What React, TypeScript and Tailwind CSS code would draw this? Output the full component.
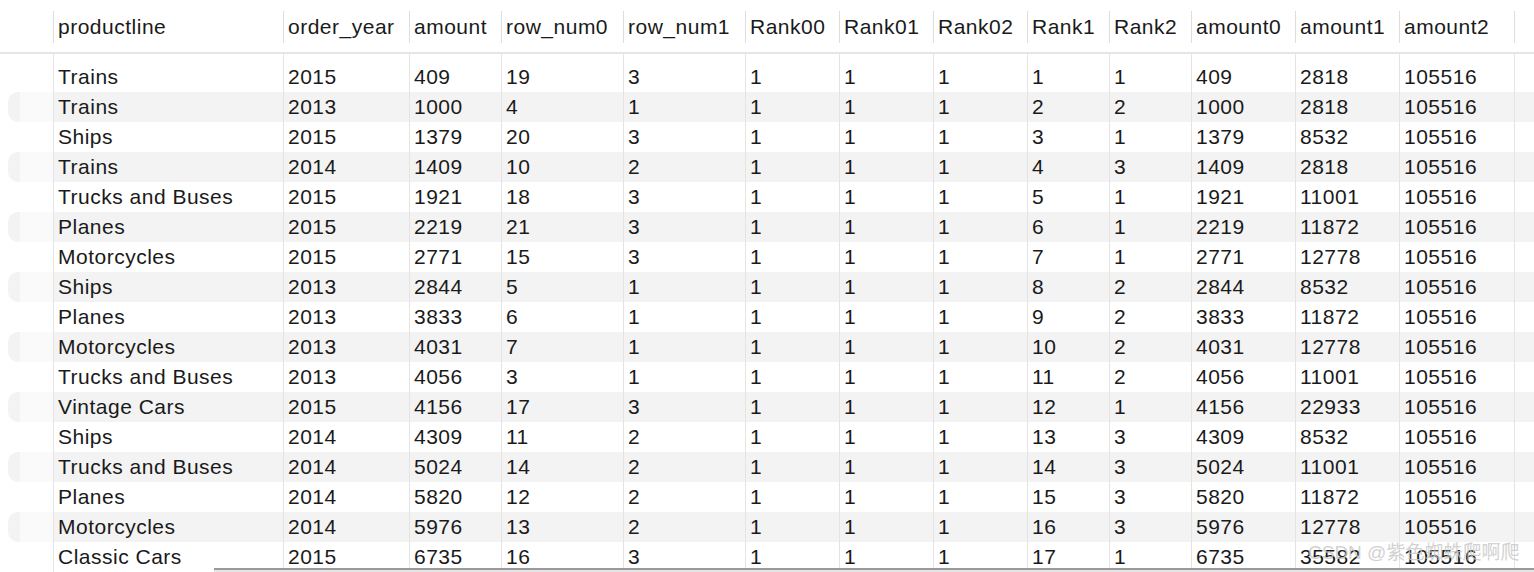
const columns = [
  { name: "productline", w: "w-[230px]" },
  { name: "order_year", w: "w-[126px]" },
  { name: "amount", w: "w-[92px]" },
  { name: "row_num0", w: "w-[122px]" },
  { name: "row_num1", w: "w-[122px]" },
  { name: "Rank00", w: "w-[94px]" },
  { name: "Rank01", w: "w-[94px]" },
  { name: "Rank02", w: "w-[94px]" },
  { name: "Rank1", w: "w-[82px]" },
  { name: "Rank2", w: "w-[82px]" },
  { name: "amount0", w: "w-[104px]" },
  { name: "amount1", w: "w-[104px]" },
  { name: "amount2", w: "w-[115px]" },
];

const rows: (string | number)[][] = [
  ["Trains", 2015, 409, 19, 3, 1, 1, 1, 1, 1, 409, 2818, 105516],
  ["Trains", 2013, 1000, 4, 1, 1, 1, 1, 2, 2, 1000, 2818, 105516],
  ["Ships", 2015, 1379, 20, 3, 1, 1, 1, 3, 1, 1379, 8532, 105516],
  ["Trains", 2014, 1409, 10, 2, 1, 1, 1, 4, 3, 1409, 2818, 105516],
  ["Trucks and Buses", 2015, 1921, 18, 3, 1, 1, 1, 5, 1, 1921, 11001, 105516],
  ["Planes", 2015, 2219, 21, 3, 1, 1, 1, 6, 1, 2219, 11872, 105516],
  ["Motorcycles", 2015, 2771, 15, 3, 1, 1, 1, 7, 1, 2771, 12778, 105516],
  ["Ships", 2013, 2844, 5, 1, 1, 1, 1, 8, 2, 2844, 8532, 105516],
  ["Planes", 2013, 3833, 6, 1, 1, 1, 1, 9, 2, 3833, 11872, 105516],
  ["Motorcycles", 2013, 4031, 7, 1, 1, 1, 1, 10, 2, 4031, 12778, 105516],
  ["Trucks and Buses", 2013, 4056, 3, 1, 1, 1, 1, 11, 2, 4056, 11001, 105516],
  ["Vintage Cars", 2015, 4156, 17, 3, 1, 1, 1, 12, 1, 4156, 22933, 105516],
  ["Ships", 2014, 4309, 11, 2, 1, 1, 1, 13, 3, 4309, 8532, 105516],
  ["Trucks and Buses", 2014, 5024, 14, 2, 1, 1, 1, 14, 3, 5024, 11001, 105516],
  ["Planes", 2014, 5820, 12, 2, 1, 1, 1, 15, 3, 5820, 11872, 105516],
  ["Motorcycles", 2014, 5976, 13, 2, 1, 1, 1, 16, 3, 5976, 12778, 105516],
  ["Classic Cars", 2015, 6735, 16, 3, 1, 1, 1, 17, 1, 6735, 35582, 105516],
];

const Header = () => (
  <div className="flex h-[54px] items-center border-b-2 border-[#e6e6e6] pt-[1px]">
    <div className="w-[53px] shrink-0" />
    {columns.map((c) => (
      <div key={c.name} className={`${c.w} flex shrink-0 items-center`}>
        <span className="h-[32px] w-px shrink-0 bg-[#dedede]" />
        <span className="whitespace-nowrap pl-[4px]">{c.name}</span>
      </div>
    ))}
    <span className="h-[32px] w-px shrink-0 bg-[#dedede]" />
  </div>
);

const Spacer = () => (
  <div className="flex h-[8px]">
    <div className="w-[53px] shrink-0" />
    {columns.map((c) => (
      <div key={c.name} className={`${c.w} shrink-0 border-l border-[#e4e4e4]`} />
    ))}
    <div className="w-[20px] shrink-0 border-l border-[#e4e4e4]" />
  </div>
);

const Row = ({ cells, striped }: { cells: (string | number)[]; striped: boolean }) => (
  <div className="flex h-[30px]">
    <div className="flex w-[53px] shrink-0 pl-[8px]">
      {striped && (
        <div className="flex h-full w-[45px] rounded-l-[10px] bg-[#f3f3f3] pl-[12px]">
          <div className="h-full w-full bg-[#fafafa]" />
        </div>
      )}
    </div>
    <div className={`flex flex-1 ${striped ? "bg-[#f3f3f3]" : ""}`}>
      {columns.map((c, i) => (
        <div
          key={c.name}
          className={`${c.w} shrink-0 whitespace-nowrap border-l border-[#e4e4e4] pl-[4px] leading-[30px]`}
        >
          {cells[i]}
        </div>
      ))}
      <div className="w-[20px] shrink-0 border-l border-[#e4e4e4]" />
    </div>
  </div>
);

export default function App() {
  return (
    <div className="relative h-[572px] w-[1534px] overflow-hidden bg-white font-['Liberation_Sans',Arial,sans-serif] text-[21px] tracking-[0.5px] text-[#1a1a1a]">
      <Header />
      <Spacer />
      {rows.map((r, i) => (
        <Row key={i} cells={r} striped={i % 2 === 1} />
      ))}

      {/* horizontal scrollbar */}
      <div className="absolute bottom-0 left-[214px] right-0 h-[4px] border-t-2 border-[#9a9a9a] bg-[#e4e4e4]" />

      {/* watermark */}
      <div className="absolute left-[1308px] top-[539px] whitespace-nowrap font-['Liberation_Sans','Noto_Sans_CJK_SC',sans-serif] text-[19px] tracking-normal text-[#c8c8c8] opacity-80">
        CSDN @紫色蜘蛛爬啊爬
      </div>
    </div>
  );
}
